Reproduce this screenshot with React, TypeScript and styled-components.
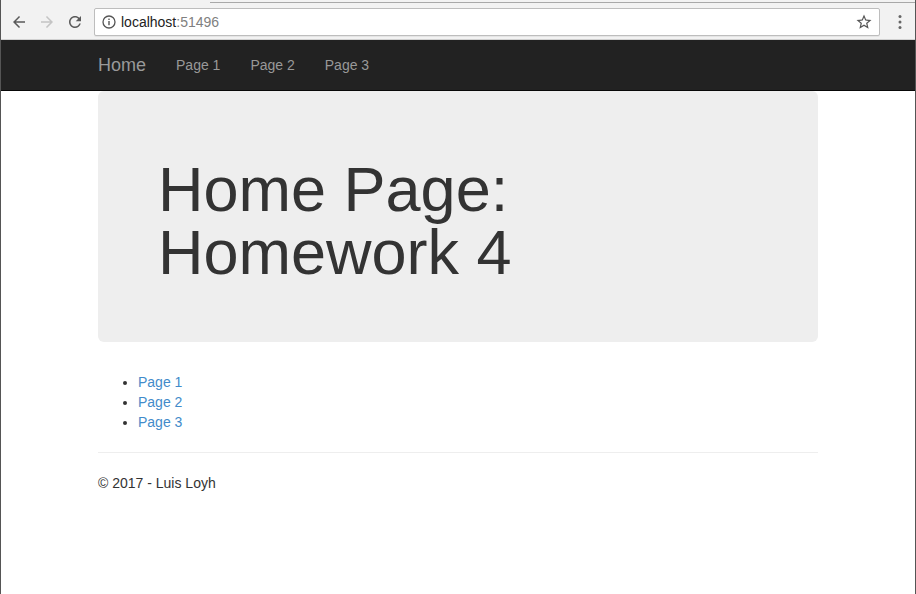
import styled, { createGlobalStyle } from "styled-components";

const GlobalStyle = createGlobalStyle`
  html, body {
    margin: 0;
    padding: 0;
    background: #fff;
  }
  body {
    font-family: "Liberation Sans", Arial, sans-serif;
    font-size: 14px;
    line-height: 20px;
    color: #333;
  }
`;

const pages = ["Page 1", "Page 2", "Page 3"];

const BackIcon = ({ color }: { color: string }) => (
  <svg width="18" height="18" viewBox="0 0 24 24">
    <path fill={color} d="M20 11H7.83l5.59-5.59L12 4l-8 8 8 8 1.41-1.41L7.83 13H20v-2z" />
  </svg>
);

const ForwardIcon = ({ color }: { color: string }) => (
  <svg width="18" height="18" viewBox="0 0 24 24">
    <path fill={color} d="M4 11h12.17l-5.59-5.59L12 4l8 8-8 8-1.41-1.41L16.17 13H4v-2z" />
  </svg>
);

const ReloadIcon = () => (
  <svg width="18" height="18" viewBox="0 0 24 24">
    <path
      fill="#5a5a5a"
      d="M17.65 6.35C16.2 4.9 14.21 4 12 4c-4.42 0-7.99 3.58-7.99 8s3.57 8 7.99 8c3.73 0 6.84-2.55 7.730-6h-2.08c-.82 2.33-3.04 4-5.65 4-3.31 0-6-2.69-6-6s2.69-6 6-6c1.66 0 3.14.69 4.22 1.78L13 11h7V4l-2.35 2.35z"
    />
  </svg>
);

const InfoIcon = () => (
  <svg width="14" height="14" viewBox="0 0 14 14">
    <circle cx="7" cy="7" r="6" fill="none" stroke="#555" strokeWidth="1.3" />
    <rect x="6.3" y="6" width="1.4" height="4.2" fill="#555" />
    <rect x="6.3" y="3.6" width="1.4" height="1.4" fill="#555" />
  </svg>
);

const StarIcon = () => (
  <svg width="18" height="18" viewBox="0 0 24 24">
    <path
      fill="#555"
      d="M22 9.24l-7.19-.62L12 2 9.19 8.63 2 9.24l5.46 4.73L5.82 21 12 17.27 18.18 21l-1.63-7.03L22 9.24zM12 15.4l-3.76 2.27 1-4.28-3.32-2.88 4.38-.38L12 6.1l1.71 4.04 4.38.38-3.32 2.88 1 4.28L12 15.4z"
    />
  </svg>
);

const MenuIcon = () => (
  <svg width="4" height="16" viewBox="0 0 4 16">
    <circle cx="2" cy="2.5" r="1.5" fill="#666" />
    <circle cx="2" cy="8" r="1.5" fill="#666" />
    <circle cx="2" cy="13.5" r="1.5" fill="#666" />
  </svg>
);

const App = () => {
  return (
    <S.Window>
      <GlobalStyle />
      <S.Chrome>
        <S.TabStrip>
          <S.ActiveTab />
          <S.TabLine />
        </S.TabStrip>
        <S.Toolbar>
          <S.NavButton>
            <BackIcon color="#5a5a5a" />
          </S.NavButton>
          <S.NavButton>
            <ForwardIcon color="#c4c4c4" />
          </S.NavButton>
          <S.NavButton>
            <ReloadIcon />
          </S.NavButton>
          <S.Omnibox>
            <InfoIcon />
            <S.Url>
              localhost<S.Port>:51496</S.Port>
            </S.Url>
            <S.Star>
              <StarIcon />
            </S.Star>
          </S.Omnibox>
          <S.Menu>
            <MenuIcon />
          </S.Menu>
        </S.Toolbar>
      </S.Chrome>

      <S.Navbar>
        <S.Container>
          <S.NavRow>
            <S.Brand href="#">Home</S.Brand>
            {pages.map((p) => (
              <S.NavLink key={p} href="#">
                {p}
              </S.NavLink>
            ))}
          </S.NavRow>
        </S.Container>
      </S.Navbar>

      <S.Container>
        <S.Jumbotron>
          <S.Title>Home Page: Homework 4</S.Title>
        </S.Jumbotron>

        <S.List>
          {pages.map((p) => (
            <li key={p}>
              <S.Link href="#">{p}</S.Link>
            </li>
          ))}
        </S.List>

        <S.Rule />
        <S.Footer>© 2017 - Luis Loyh</S.Footer>
      </S.Container>
    </S.Window>
  );
};

const S = (() => {
  const Window = styled.div`
    box-sizing: border-box;
    width: 916px;
    height: 594px;
    overflow: hidden;
    border-left: 1px solid #555;
    border-right: 1px solid #555;
    background: #fff;
  `;

  const Chrome = styled.div`
    height: 40px;
    background: #f2f2f2;
    border-bottom: 1px solid #d0d0d0;
    box-sizing: border-box;
  `;

  const TabStrip = styled.div`
    display: flex;
    height: 3px;
  `;

  const ActiveTab = styled.div`
    width: 209px;
  `;

  const TabLine = styled.div`
    flex: 1;
    border-bottom: 1px solid #a8a8a8;
  `;

  const Toolbar = styled.div`
    display: flex;
    align-items: center;
    height: 37px;
    padding-left: 9px;
  `;

  const NavButton = styled.div`
    display: flex;
    align-items: center;
    justify-content: center;
    width: 18px;
    height: 18px;
    margin-right: 10px;
  `;

  const Omnibox = styled.div`
    display: flex;
    align-items: center;
    box-sizing: border-box;
    width: 786px;
    height: 28px;
    padding: 0 6px 0 7px;
    background: #fff;
    border: 1px solid #bdbdbd;
    border-radius: 2px;
    box-shadow: 0 1px 0 rgba(0, 0, 0, 0.05);
  `;

  const Url = styled.span`
    flex: 1;
    margin-left: 5px;
    font-size: 14px;
    color: #222;
  `;

  const Port = styled.span`
    color: #808080;
  `;

  const Star = styled.div`
    display: flex;
    align-items: center;
  `;

  const Menu = styled.div`
    display: flex;
    align-items: center;
    margin-left: 18px;
  `;

  const Navbar = styled.nav`
    height: 51px;
    box-sizing: border-box;
    background: #222;
    border-bottom: 1px solid #080808;
  `;

  const Container = styled.div`
    width: 720px;
    margin: 0 auto;
  `;

  const NavRow = styled.div`
    display: flex;
    align-items: center;
    height: 50px;
  `;

  const Brand = styled.a`
    font-size: 18px;
    line-height: 20px;
    color: #999;
    text-decoration: none;
    padding-right: 15px;
  `;

  const NavLink = styled.a`
    font-size: 14px;
    color: #999;
    text-decoration: none;
    padding: 15px;
  `;

  const Jumbotron = styled.div`
    background: #eee;
    border-radius: 6px;
    padding: 48px 60px;
    margin-bottom: 30px;
  `;

  const Title = styled.h1`
    margin: 19px 0 10px;
    width: 600px;
    font-size: 63px;
    line-height: 63px;
    font-weight: 500;
    color: #333;
  `;

  const List = styled.ul`
    margin: 0 0 10px;
    padding-left: 40px;
  `;

  const Link = styled.a`
    color: #428bca;
    text-decoration: none;
  `;

  const Rule = styled.hr`
    margin: 20px 0;
    border: 0;
    border-top: 1px solid #eee;
  `;

  const Footer = styled.p`
    margin: 0;
  `;

  return {
    Window,
    Chrome,
    TabStrip,
    ActiveTab,
    TabLine,
    Toolbar,
    NavButton,
    Omnibox,
    Url,
    Port,
    Star,
    Menu,
    Navbar,
    Container,
    NavRow,
    Brand,
    NavLink,
    Jumbotron,
    Title,
    List,
    Link,
    Rule,
    Footer,
  };
})();

export default App;
